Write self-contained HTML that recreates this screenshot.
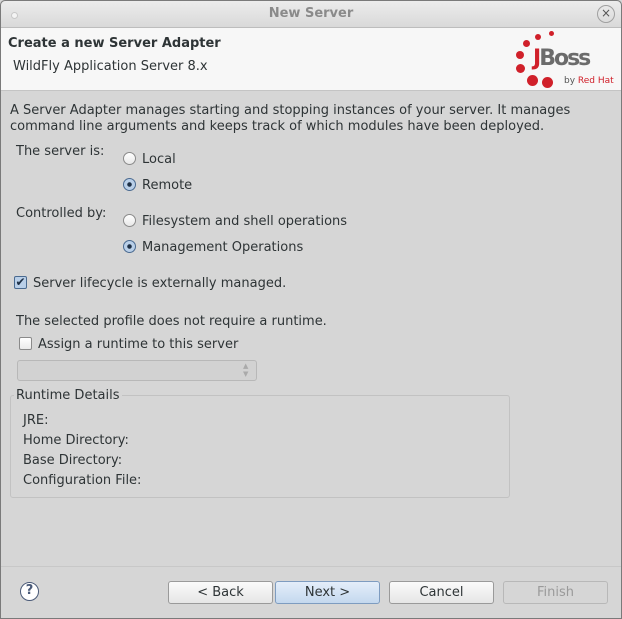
<!DOCTYPE html>
<html><head><style>
*{margin:0;padding:0;box-sizing:border-box}
body{width:622px;height:619px;overflow:hidden;font-family:"DejaVu Sans","Liberation Sans",sans-serif;font-size:13px;color:#2e3436;background:#d6d6d6;position:relative}
.frame{position:absolute;left:0;top:0;width:622px;height:619px;border:1px solid #7a7a7a;border-radius:5px 5px 0 0}
.title{position:absolute;left:1px;top:1px;width:620px;height:27px;background:linear-gradient(#ececec,#d9d9d9);border-bottom:1px solid #bdbdbd;text-align:center;font-weight:bold;color:#8a8a8a;line-height:26px;font-size:13px;border-radius:5px 5px 0 0}
.hdr{position:absolute;left:1px;top:28px;width:620px;height:63px;background:#f7f7f7;border-bottom:1px solid #c4c4c4}
.t{position:absolute;white-space:nowrap}
.radio{position:absolute;width:13px;height:13px;border-radius:50%;border:1px solid #8a8a8a;background:linear-gradient(#fff,#e8e8e8)}
.radio.on{border-color:#4a6a90;background:radial-gradient(circle,#1d2f45 0 2px,#b9cfe8 2.5px)}
.cb{position:absolute;width:13px;height:13px;border:1px solid #8a8a8a;border-radius:2px;background:linear-gradient(#fff,#eaeaea)}
.btn{position:absolute;top:581px;height:23px;width:105px;border:1px solid #9a9a9a;border-radius:3px;background:linear-gradient(#fbfbfb,#e6e6e6);text-align:center;line-height:22px}
.dot{position:absolute;border-radius:50%;background:#d0202a}
</style></head><body>
<div class="frame"></div>
<div class="title">New Server</div>
<div style="position:absolute;left:11px;top:12px;width:7px;height:7px;border-radius:50%;background:#f4f4f4;border:1px solid #c8c8c8"></div>
<div style="position:absolute;left:597px;top:5px;width:18px;height:18px;border-radius:50%;border:1px solid #a0a0a0;text-align:center;line-height:15px;font-size:12px;color:#555">×</div>
<div class="hdr"></div>
<div class="t" style="left:8px;top:36px;font-weight:bold">Create a new Server Adapter</div>
<div class="t" style="left:13px;top:59px">WildFly Application Server 8.x</div>
<div class="dot" style="left:549px;top:31px;width:5px;height:5px"></div>
<div class="dot" style="left:535px;top:34px;width:6px;height:6px"></div>
<div class="dot" style="left:523px;top:40px;width:7px;height:7px"></div>
<div class="dot" style="left:516px;top:51px;width:8px;height:8px"></div>
<div class="dot" style="left:516px;top:64px;width:9px;height:9px"></div>
<div class="dot" style="left:527px;top:75px;width:11px;height:11px"></div>
<div class="dot" style="left:542px;top:77px;width:11px;height:11px"></div>
<div class="t" style="left:533px;top:46px;font-size:22px;font-weight:bold;color:#6b6b6b;letter-spacing:-2px"><span style="color:#d0202a">J</span>Boss</div>
<div class="t" style="left:564px;top:76px;font-size:9px;color:#555">by <span style="color:#d0202a">Red Hat</span></div>
<div class="t" style="left:10px;top:103px;line-height:16px">A Server Adapter manages starting and stopping instances of your server. It manages<br>command line arguments and keeps track of which modules have been deployed.</div>
<div class="t" style="left:16px;top:144px">The server is:</div>
<div class="radio" style="left:123px;top:152px"></div><div class="t" style="left:142px;top:152px">Local</div>
<div class="radio on" style="left:123px;top:178px"></div><div class="t" style="left:142px;top:178px">Remote</div>
<div class="t" style="left:16px;top:206px">Controlled by:</div>
<div class="radio" style="left:123px;top:214px"></div><div class="t" style="left:142px;top:214px">Filesystem and shell operations</div>
<div class="radio on" style="left:123px;top:240px"></div><div class="t" style="left:142px;top:240px">Management Operations</div>
<div class="cb" style="left:14px;top:276px;border-color:#4a6a90;background:#b9cfe8;color:#1d2f45;font-size:12px;line-height:11px;text-align:center">✔</div>
<div class="t" style="left:33px;top:276px">Server lifecycle is externally managed.</div>
<div class="t" style="left:16px;top:314px">The selected profile does not require a runtime.</div>
<div class="cb" style="left:19px;top:337px"></div>
<div class="t" style="left:38px;top:337px">Assign a runtime to this server</div>
<div style="position:absolute;left:17px;top:360px;width:240px;height:21px;border:1px solid #b8b8b8;border-radius:3px;background:#d2d2d2"></div>
<div class="t" style="left:243px;top:362px;font-size:7px;color:#aaa;line-height:8px">▲<br>▼</div>
<div style="position:absolute;left:10px;top:395px;width:500px;height:103px;border:1px solid #c2c2c2;border-radius:3px"></div>
<div class="t" style="left:14px;top:388px;background:#d6d6d6;padding:0 2px">Runtime Details</div>
<div class="t" style="left:23px;top:413px">JRE:</div>
<div class="t" style="left:23px;top:433px">Home Directory:</div>
<div class="t" style="left:23px;top:453px">Base Directory:</div>
<div class="t" style="left:23px;top:473px">Configuration File:</div>
<div style="position:absolute;left:1px;top:566px;width:620px;height:1px;background:#c8c8c8"></div>
<div style="position:absolute;left:20px;top:582px;width:19px;height:19px;border-radius:50%;border:1.5px solid #4a5a78;background:#fff;text-align:center;line-height:16px;font-weight:bold;color:#4a5a78;font-size:13px">?</div>
<div class="btn" style="left:168px">&lt; Back</div>
<div class="btn" style="left:275px;width:105px;border-color:#7e9cc0;background:linear-gradient(#e4eefa,#c4d8ee)">Next &gt;</div>
<div class="btn" style="left:389px">Cancel</div>
<div class="btn" style="left:503px;color:#9a9a9a;background:#d6d6d6;border-color:#b8b8b8">Finish</div>
</body></html>
